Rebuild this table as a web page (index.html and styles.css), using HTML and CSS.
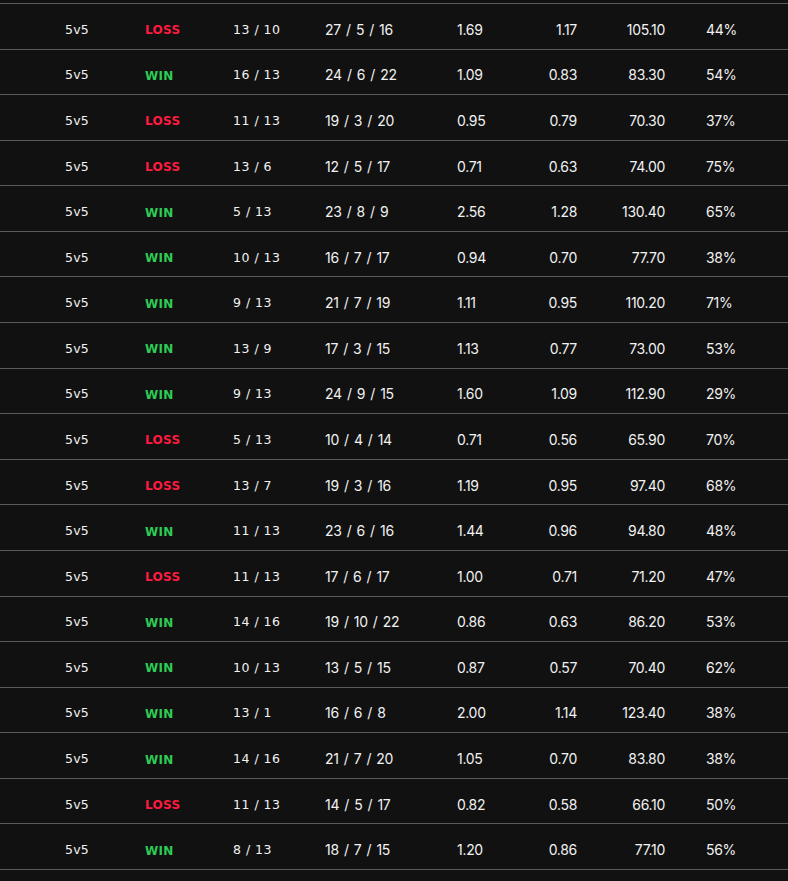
FILE: index.html
```html
<!DOCTYPE html>
<html>
<head>
<meta charset="utf-8">
<link rel="stylesheet" href="styles.css">
</head>
<body>
<div class="table">
  <div class="row"><span class="c mode">5v5</span><span class="c res loss">LOSS</span><span class="c score">13 / 10</span><span class="c kda">27 / 5 / 16</span><span class="c n1">1.69</span><span class="c n2">1.17</span><span class="c n3">105.10</span><span class="c pct">44%</span></div>
  <div class="row"><span class="c mode">5v5</span><span class="c res win">WIN</span><span class="c score">16 / 13</span><span class="c kda">24 / 6 / 22</span><span class="c n1">1.09</span><span class="c n2">0.83</span><span class="c n3">83.30</span><span class="c pct">54%</span></div>
  <div class="row"><span class="c mode">5v5</span><span class="c res loss">LOSS</span><span class="c score">11 / 13</span><span class="c kda">19 / 3 / 20</span><span class="c n1">0.95</span><span class="c n2">0.79</span><span class="c n3">70.30</span><span class="c pct">37%</span></div>
  <div class="row"><span class="c mode">5v5</span><span class="c res loss">LOSS</span><span class="c score">13 / 6</span><span class="c kda">12 / 5 / 17</span><span class="c n1">0.71</span><span class="c n2">0.63</span><span class="c n3">74.00</span><span class="c pct">75%</span></div>
  <div class="row"><span class="c mode">5v5</span><span class="c res win">WIN</span><span class="c score">5 / 13</span><span class="c kda">23 / 8 / 9</span><span class="c n1">2.56</span><span class="c n2">1.28</span><span class="c n3">130.40</span><span class="c pct">65%</span></div>
  <div class="row"><span class="c mode">5v5</span><span class="c res win">WIN</span><span class="c score">10 / 13</span><span class="c kda">16 / 7 / 17</span><span class="c n1">0.94</span><span class="c n2">0.70</span><span class="c n3">77.70</span><span class="c pct">38%</span></div>
  <div class="row"><span class="c mode">5v5</span><span class="c res win">WIN</span><span class="c score">9 / 13</span><span class="c kda">21 / 7 / 19</span><span class="c n1">1.11</span><span class="c n2">0.95</span><span class="c n3">110.20</span><span class="c pct">71%</span></div>
  <div class="row"><span class="c mode">5v5</span><span class="c res win">WIN</span><span class="c score">13 / 9</span><span class="c kda">17 / 3 / 15</span><span class="c n1">1.13</span><span class="c n2">0.77</span><span class="c n3">73.00</span><span class="c pct">53%</span></div>
  <div class="row"><span class="c mode">5v5</span><span class="c res win">WIN</span><span class="c score">9 / 13</span><span class="c kda">24 / 9 / 15</span><span class="c n1">1.60</span><span class="c n2">1.09</span><span class="c n3">112.90</span><span class="c pct">29%</span></div>
  <div class="row"><span class="c mode">5v5</span><span class="c res loss">LOSS</span><span class="c score">5 / 13</span><span class="c kda">10 / 4 / 14</span><span class="c n1">0.71</span><span class="c n2">0.56</span><span class="c n3">65.90</span><span class="c pct">70%</span></div>
  <div class="row"><span class="c mode">5v5</span><span class="c res loss">LOSS</span><span class="c score">13 / 7</span><span class="c kda">19 / 3 / 16</span><span class="c n1">1.19</span><span class="c n2">0.95</span><span class="c n3">97.40</span><span class="c pct">68%</span></div>
  <div class="row"><span class="c mode">5v5</span><span class="c res win">WIN</span><span class="c score">11 / 13</span><span class="c kda">23 / 6 / 16</span><span class="c n1">1.44</span><span class="c n2">0.96</span><span class="c n3">94.80</span><span class="c pct">48%</span></div>
  <div class="row"><span class="c mode">5v5</span><span class="c res loss">LOSS</span><span class="c score">11 / 13</span><span class="c kda">17 / 6 / 17</span><span class="c n1">1.00</span><span class="c n2">0.71</span><span class="c n3">71.20</span><span class="c pct">47%</span></div>
  <div class="row"><span class="c mode">5v5</span><span class="c res win">WIN</span><span class="c score">14 / 16</span><span class="c kda">19 / 10 / 22</span><span class="c n1">0.86</span><span class="c n2">0.63</span><span class="c n3">86.20</span><span class="c pct">53%</span></div>
  <div class="row"><span class="c mode">5v5</span><span class="c res win">WIN</span><span class="c score">10 / 13</span><span class="c kda">13 / 5 / 15</span><span class="c n1">0.87</span><span class="c n2">0.57</span><span class="c n3">70.40</span><span class="c pct">62%</span></div>
  <div class="row"><span class="c mode">5v5</span><span class="c res win">WIN</span><span class="c score">13 / 1</span><span class="c kda">16 / 6 / 8</span><span class="c n1">2.00</span><span class="c n2">1.14</span><span class="c n3">123.40</span><span class="c pct">38%</span></div>
  <div class="row"><span class="c mode">5v5</span><span class="c res win">WIN</span><span class="c score">14 / 16</span><span class="c kda">21 / 7 / 20</span><span class="c n1">1.05</span><span class="c n2">0.70</span><span class="c n3">83.80</span><span class="c pct">38%</span></div>
  <div class="row"><span class="c mode">5v5</span><span class="c res loss">LOSS</span><span class="c score">11 / 13</span><span class="c kda">14 / 5 / 17</span><span class="c n1">0.82</span><span class="c n2">0.58</span><span class="c n3">66.10</span><span class="c pct">50%</span></div>
  <div class="row"><span class="c mode">5v5</span><span class="c res win">WIN</span><span class="c score">8 / 13</span><span class="c kda">18 / 7 / 15</span><span class="c n1">1.20</span><span class="c n2">0.86</span><span class="c n3">77.10</span><span class="c pct">56%</span></div>
</div>
</body>
</html>
```

FILE: styles.css
```css
html, body {
  margin: 0;
  padding: 0;
  background: #111111;
}
body {
  height: 881px;
  overflow: hidden;
}
.table {
  padding-top: 3px;
  border-bottom: 1px solid #5a5a5a;
  width: 788px;
}
.row {
  box-sizing: border-box;
  height: 45.58px;
  border-top: 1px solid #5a5a5a;
  display: grid;
  grid-template-columns: 80px 88px 92px 132px 70px 50px 88px 1fr;
  align-items: center;
  padding-left: 65px;
  padding-top: 6px;
  color: #f2f2f2;
}
.c {
  white-space: nowrap;
}
.mode, .res, .score {
  font-family: "DejaVu Sans", sans-serif;
  font-size: 12.5px;
  letter-spacing: 0.5px;
}
.mode {
  letter-spacing: 0.2px;
}
.res {
  font-size: 12px;
  letter-spacing: 0.3px;
  font-weight: bold;
  padding-top: 2px;
}
.win { color: #2ecc55; }
.loss { color: #ff1a40; }
.kda, .n1, .n2, .n3, .pct {
  font-family: Inter, sans-serif;
  font-size: 14px;
  letter-spacing: -0.3px;
}
.kda {
  word-spacing: 1.5px;
}
.n2, .n3 {
  text-align: right;
}
.pct {
  padding-left: 41px;
}
```
